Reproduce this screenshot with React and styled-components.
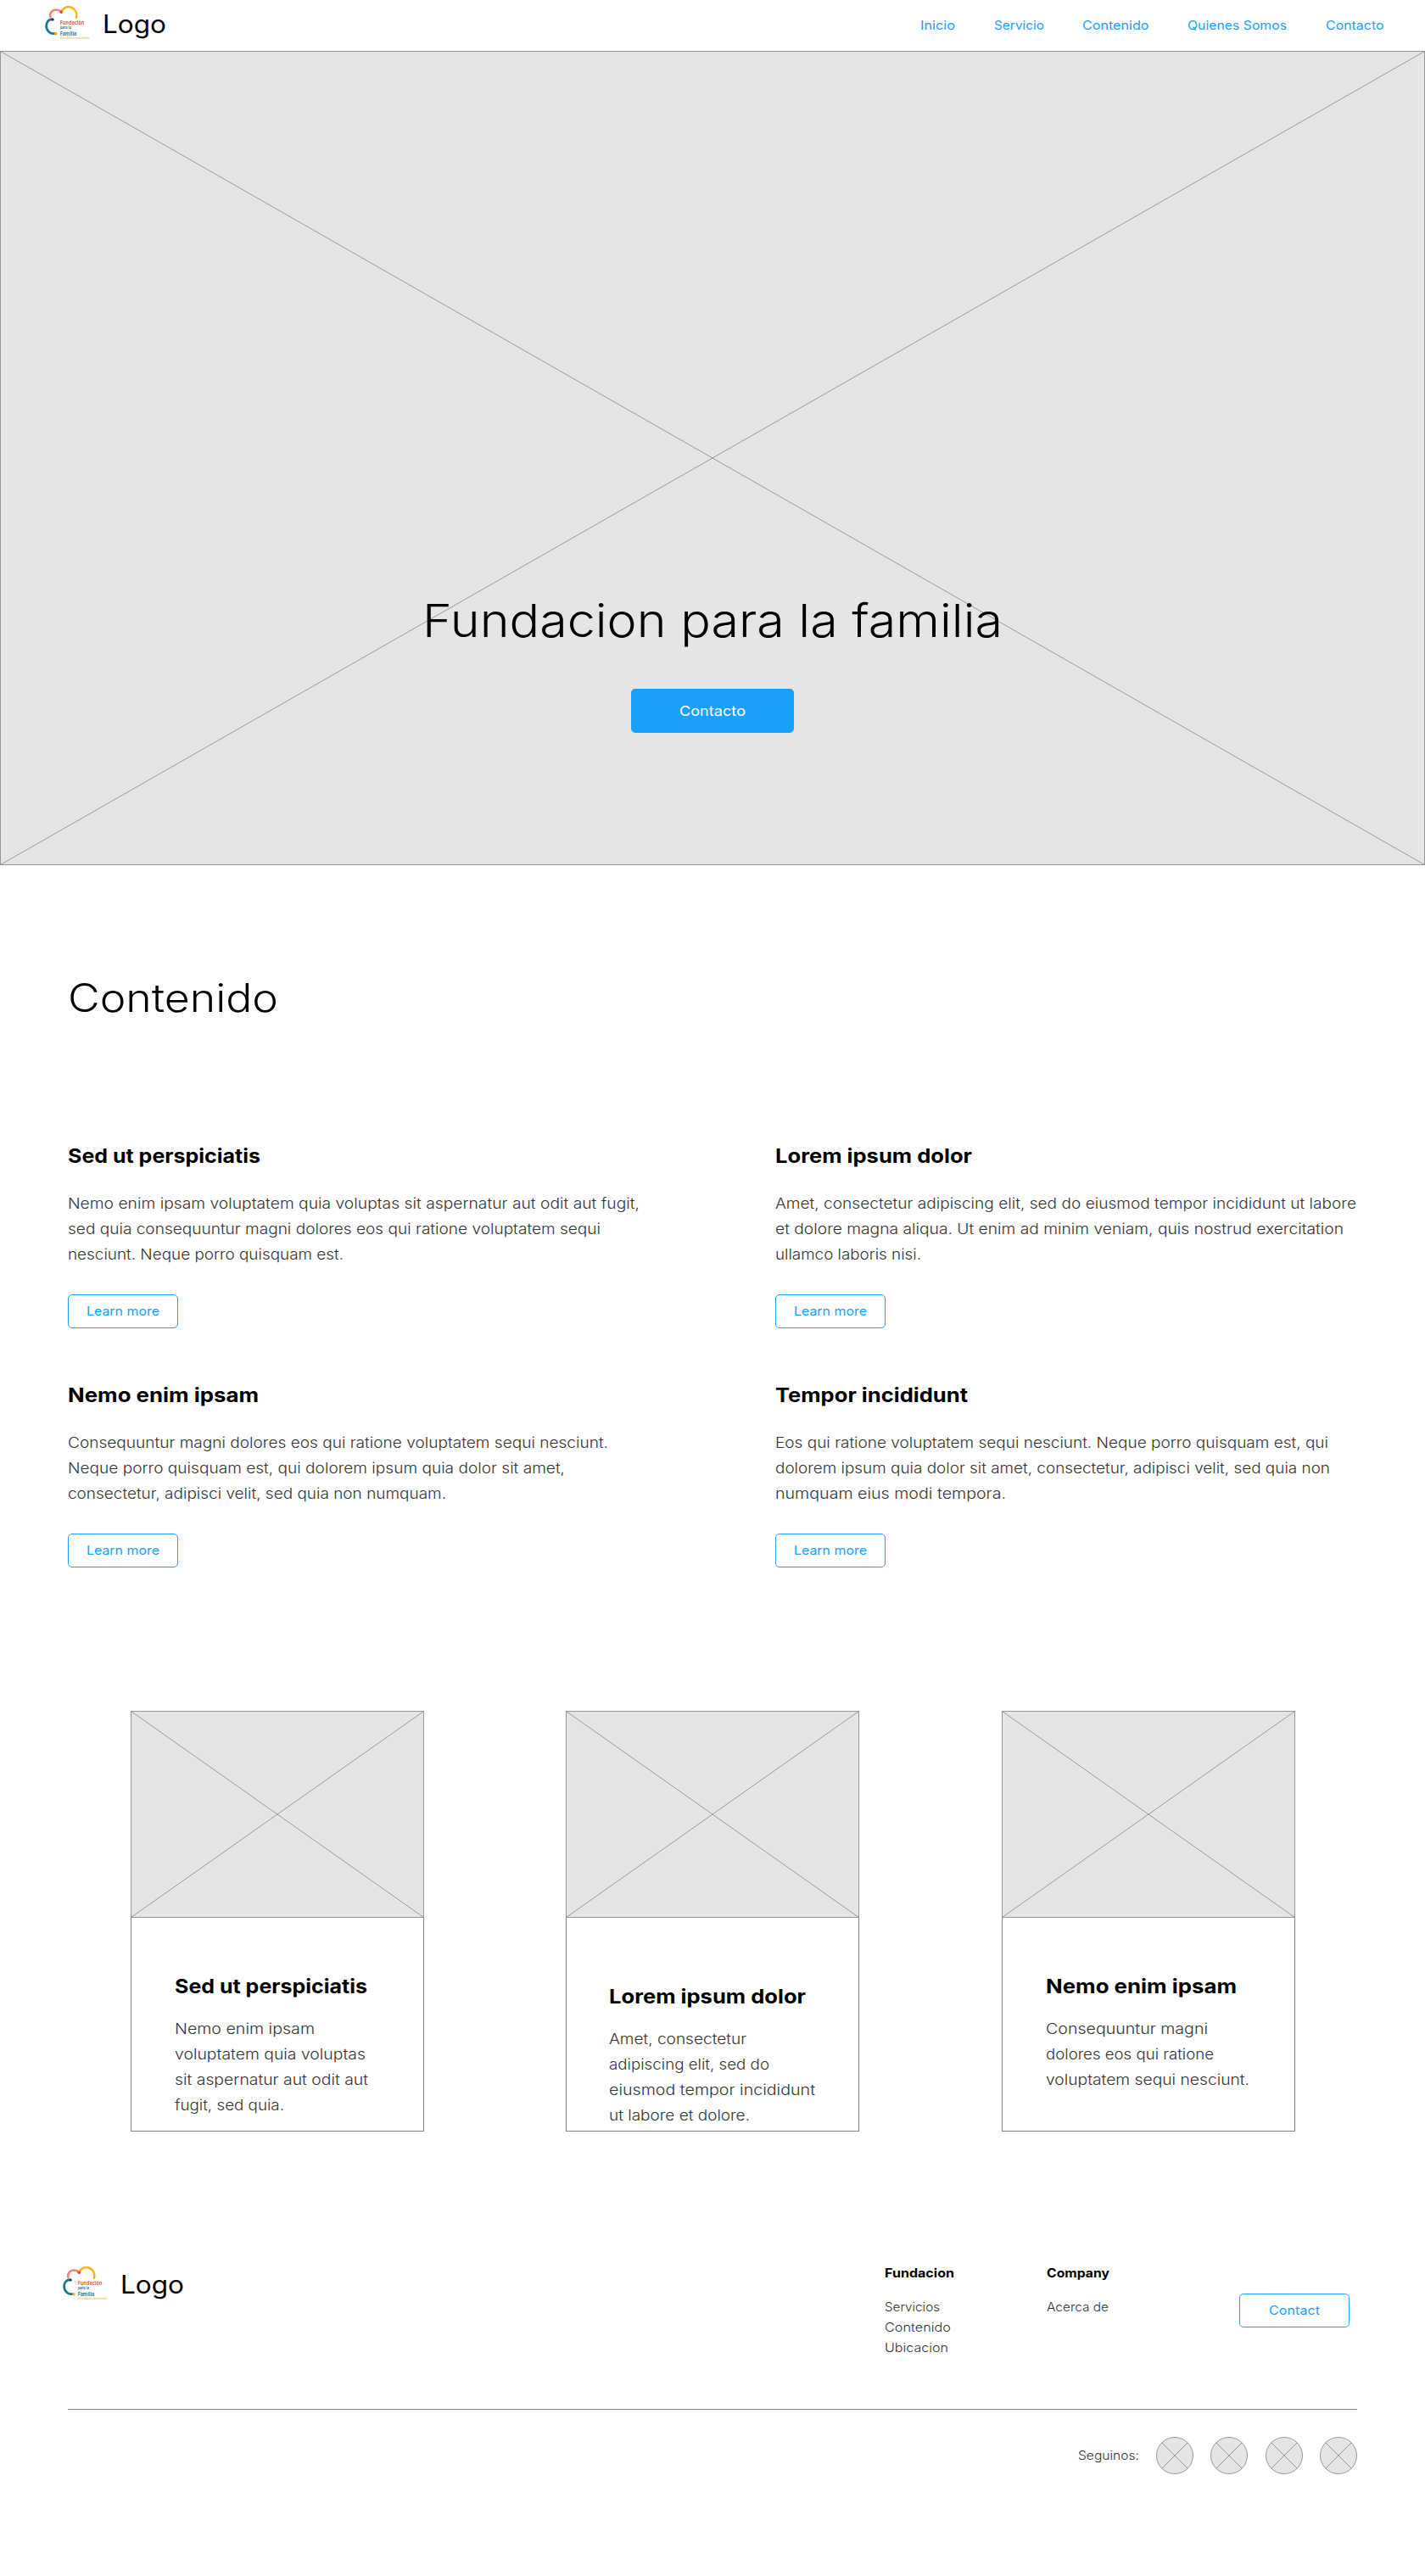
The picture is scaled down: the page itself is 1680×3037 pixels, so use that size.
import React, { useLayoutEffect, useRef, useState } from "react";
import styled, { createGlobalStyle } from "styled-components";

const BLUE = "#1a9ffc";

const GlobalStyle = createGlobalStyle`
  *, *::before, *::after { box-sizing: border-box; }
  body {
    margin: 0;
    background: #fff;
    color: #000;
    font-family: Inter, "Open Sans", "Liberation Sans", sans-serif;
    font-kerning: normal;
  }
  h1, h2, h3, h4, p, ul { margin: 0; padding: 0; }
  ul { list-style: none; }
  a { color: inherit; text-decoration: none; }
`;

/* One line of type, widened so that it fills the given measure. */
const Measure = styled.span`
  display: block;
  white-space: pre;
`;

const Stretch = styled.span`
  display: block;
  width: max-content;
  transform-origin: 0 50%;
`;

function Fit({ width, children }) {
  const ref = useRef(null);
  const [scale, setScale] = useState(1);
  useLayoutEffect(() => {
    setScale(width / parseFloat(getComputedStyle(ref.current).width));
  }, [width, children]);
  return (
    <Measure style={{ width }}>
      <Stretch ref={ref} style={{ transform: `scaleX(${scale})` }}>{children}</Stretch>
    </Measure>
  );
}

const Page = styled.div`
  width: 1680px;
  height: 3037px;
  overflow: hidden;
  background: #fff;
`;

const Header = styled.header`
  display: flex;
  justify-content: space-between;
  height: 60px;
  padding: 0 49px 0 50px;
`;

const BrandLink = styled.a`
  display: flex;
  align-items: flex-start;
  height: 60px;
`;

const Mark = styled.svg`
  display: block;
  width: 64px;
  height: 60px;
`;

const MarkText = styled.text`
  font-family: "Open Sans", "Noto Sans", sans-serif;
  font-weight: ${(p) => p.$weight || 700};
  font-size: ${(p) => p.$size}px;
  fill: ${(p) => p.$fill};
`;

const Wordmark = styled.span`
  margin-left: 7px;
  font-size: 29.5px;
  line-height: 57px;
  font-weight: 400;
`;

const Nav = styled.nav`
  display: flex;
  align-items: center;
  height: 60px;
  padding-bottom: 1px;
  gap: 45.5px;
  color: ${BLUE};
  font-size: 14.5px;
  font-weight: 400;
`;

const Hero = styled.section`
  position: relative;
  display: flex;
  flex-direction: column;
  align-items: center;
  height: 960px;
  padding-top: 638px;
`;

const Placeholder = styled.svg`
  display: block;
  width: ${(p) => p.width}px;
  height: ${(p) => p.height}px;
`;

const HeroBackdrop = styled.div`
  position: absolute;
  inset: 0;
`;

const HeroTitle = styled.h1`
  position: relative;
  font-size: 54px;
  line-height: 68px;
  font-weight: 300;
`;

const PrimaryButton = styled.a`
  position: relative;
  display: flex;
  align-items: center;
  justify-content: center;
  width: 192px;
  height: 52px;
  margin-top: 46px;
  border-radius: 5px;
  background: ${BLUE};
  color: #fff;
  font-size: 16.5px;
  font-weight: 400;
`;

const OutlineButton = styled.a`
  display: flex;
  align-items: center;
  justify-content: center;
  width: 130px;
  height: 40px;
  margin-top: ${(p) => p.$top}px;
  padding-bottom: 1px;
  border: 1px solid ${BLUE};
  border-radius: 5px;
  color: ${BLUE};
  font-size: 14.5px;
  font-weight: 400;
`;

const Content = styled.section`
  padding: 127px 80px 0;
`;

const SectionTitle = styled.h2`
  font-size: 46px;
  line-height: 58px;
  font-weight: 300;
`;

const Topics = styled.div`
  display: grid;
  grid-template-columns: 834px 1fr;
  row-gap: 64px;
  margin-top: 143px;
`;

const Subtitle = styled.h3`
  font-size: 23px;
  line-height: 30px;
  font-weight: 700;
`;

const Copy = styled.p`
  margin-top: ${(p) => p.$top}px;
  color: #333;
  font-size: 17px;
  line-height: 30px;
  font-weight: 300;
`;

const Cards = styled.section`
  display: grid;
  grid-template-columns: 513px 514px 346px;
  margin-top: 169px;
  padding-left: 154px;
`;

const Card = styled.article`
  width: 346px;
  height: 496px;
  border: 1px solid #808080;
`;

const CardImage = styled.div`
  margin: -1px -1px 0;
`;

const CardBody = styled.div`
  padding: ${(p) => (p.$lowered ? 78 : 66)}px 0 0 ${(p) => (p.$lowered ? 50 : 51)}px;
`;

const Footer = styled.footer`
  padding: 152px 80px 0;
`;

const FooterTop = styled.div`
  display: flex;
  height: 175px;
`;

const FooterBrand = styled.div`
  width: 963px;
  margin-left: -9px;
`;

const FooterColumn = styled.div`
  width: ${(p) => p.$width}px;
  padding-top: 3px;
  margin-left: ${(p) => p.$left || 0}px;
  line-height: 24px;
  font-size: 14.5px;
`;

const FooterHeading = styled.h4`
  font-size: 14.5px;
  font-weight: 700;
`;

const FooterLinks = styled.ul`
  margin-top: 16px;
  color: #333;
  font-weight: 300;
`;

const Rule = styled.div`
  height: 1px;
  background: #808080;
`;

const Social = styled.div`
  display: flex;
  align-items: center;
  justify-content: flex-end;
  gap: 20.33px;
  margin-top: 32px;
  color: #333;
  font-size: 14.5px;
  font-weight: 300;
`;

const SocialLabel = styled.span`
  padding-bottom: 1px;
`;

const Disc = styled.svg`
  display: block;
  width: 44px;
  height: 44px;
`;

function ImageBox({ width, height }) {
  return (
    <Placeholder width={width} height={height} viewBox={`0 0 ${width} ${height}`}>
      <rect x="0.5" y="0.5" width={width - 1} height={height - 1} fill="#e5e5e5" stroke="#979797" />
      <path d={`M0.5 0.5L${width - 0.5} ${height - 0.5}M${width - 0.5} 0.5L0.5 ${height - 0.5}`} stroke="#979797" strokeWidth="1" fill="none" />
    </Placeholder>
  );
}

function Brand() {
  return (
    <BrandLink href="#">
      <Mark viewBox="0 0 64 60">
        <g fill="none" strokeLinecap="round">
          <path d="M9.5 20C8.2 14.8 12 11.4 16 11.4C19 11.4 21 12.6 22.2 14.3" stroke="#f5826c" strokeWidth="2.5" />
          <path d="M22.6 13.8C24.6 8.6 30 6.9 34.6 9C39.4 11.2 41.2 16 40 20.6" stroke="#fbb019" strokeWidth="2.5" />
          <path d="M12 22.8C7 22.4 4.4 26.6 4.6 31C4.8 36 9 40.4 14.6 39.6" stroke="#17798c" strokeWidth="2.8" />
        </g>
        <circle cx="22.3" cy="14.2" r="1.7" fill="#e5452e" />
        <circle cx="12.2" cy="23" r="1.5" fill="#17404e" />
        <circle cx="15.8" cy="39.7" r="1.8" fill="#e9a923" />
        <MarkText x="20.7" y="29" $size={6.6} $fill="#d9674f" textLength="28.6" lengthAdjust="spacingAndGlyphs">Fundación</MarkText>
        <MarkText x="20.9" y="34.3" $size={4.8} $fill="#2f7f91" textLength="13.2" lengthAdjust="spacingAndGlyphs">para la</MarkText>
        <MarkText x="20.7" y="41.5" $size={6.6} $fill="#2f7f91" textLength="19.6" lengthAdjust="spacingAndGlyphs">Familia</MarkText>
        <MarkText x="20.7" y="46" $size={2.9} $weight={600} $fill="#dfc04a" textLength="34.3" lengthAdjust="spacingAndGlyphs">Niñez Adolescencia Familia</MarkText>
      </Mark>
      <Wordmark>
        <Fit width={75}>Logo</Fit>
      </Wordmark>
    </BrandLink>
  );
}

const nav = [
  ["Inicio", 41],
  ["Servicio", 59],
  ["Contenido", 78.5],
  ["Quienes Somos", 117],
  ["Contacto", 68.5],
];

const topics = [
  {
    title: ["Sed ut perspiciatis", 227],
    lines: [
      ["Nemo enim ipsam voluptatem quia voluptas sit aspernatur aut odit aut fugit,", 674],
      ["sed quia consequuntur magni dolores eos qui ratione voluptatem sequi", 628],
      ["nesciunt. Neque porro quisquam est.", 325],
    ],
  },
  {
    title: ["Lorem ipsum dolor", 232],
    lines: [
      ["Amet, consectetur adipiscing elit, sed do eiusmod tempor incididunt ut labore", 685],
      ["et dolore magna aliqua. Ut enim ad minim veniam, quis nostrud exercitation", 670],
      ["ullamco laboris nisi.", 172],
    ],
  },
  {
    title: ["Nemo enim ipsam", 225],
    lines: [
      ["Consequuntur magni dolores eos qui ratione voluptatem sequi nesciunt.", 637],
      ["Neque porro quisquam est, qui dolorem ipsum quia dolor sit amet,", 586],
      ["consectetur, adipisci velit, sed quia non numquam.", 446],
    ],
  },
  {
    title: ["Tempor incididunt", 227],
    lines: [
      ["Eos qui ratione voluptatem sequi nesciunt. Neque porro quisquam est, qui", 652],
      ["dolorem ipsum quia dolor sit amet, consectetur, adipisci velit, sed quia non", 654],
      ["numquam eius modi tempora.", 272],
    ],
  },
];

const cards = [
  {
    title: ["Sed ut perspiciatis", 227],
    lines: [
      ["Nemo enim ipsam", 165],
      ["voluptatem quia voluptas", 225],
      ["sit aspernatur aut odit aut", 228],
      ["fugit, sed quia.", 129],
    ],
  },
  {
    title: ["Lorem ipsum dolor", 232],
    lowered: true,
    lines: [
      ["Amet, consectetur", 162],
      ["adipiscing elit, sed do", 189],
      ["eiusmod tempor incididunt", 243],
      ["ut labore et dolore.", 166],
    ],
  },
  {
    title: ["Nemo enim ipsam", 225],
    lines: [
      ["Consequuntur magni", 191],
      ["dolores eos qui ratione", 198],
      ["voluptatem sequi nesciunt.", 240],
    ],
  },
];

function Lines({ items }) {
  return items.map(([text, width]) => (
    <Fit key={text} width={width}>{text}</Fit>
  ));
}

function App() {
  return (
    <Page>
      <GlobalStyle />
      <Header>
        <Brand />
        <Nav>
          {nav.map(([label, width]) => (
            <a href="#" key={label}><Fit width={width}>{label}</Fit></a>
          ))}
        </Nav>
      </Header>

      <Hero>
        <HeroBackdrop><ImageBox width={1680} height={960} /></HeroBackdrop>
        <HeroTitle><Fit width={684}>Fundacion para la familia</Fit></HeroTitle>
        <PrimaryButton href="#"><Fit width={78}>Contacto</Fit></PrimaryButton>
      </Hero>

      <Content>
        <SectionTitle><Fit width={248}>Contenido</Fit></SectionTitle>
        <Topics>
          {topics.map(({ title, lines }) => (
            <article key={title[0]}>
              <Subtitle><Fit width={title[1]}>{title[0]}</Fit></Subtitle>
              <Copy $top={26}><Lines items={lines} /></Copy>
              <OutlineButton href="#" $top={32}><Fit width={86}>Learn more</Fit></OutlineButton>
            </article>
          ))}
        </Topics>
      </Content>

      <Cards>
        {cards.map(({ title, lines, lowered }) => (
          <Card key={title[0]}>
            <CardImage><ImageBox width={346} height={244} /></CardImage>
            <CardBody $lowered={lowered}>
              <Subtitle><Fit width={title[1]}>{title[0]}</Fit></Subtitle>
              <Copy $top={20}><Lines items={lines} /></Copy>
            </CardBody>
          </Card>
        ))}
      </Cards>

      <Footer>
        <FooterTop>
          <FooterBrand><Brand /></FooterBrand>
          <FooterColumn $width={191} $left={9}>
            <FooterHeading><Fit width={82}>Fundacion</Fit></FooterHeading>
            <FooterLinks>
              <li><Fit width={65}>Servicios</Fit></li>
              <li><Fit width={78}>Contenido</Fit></li>
              <li><Fit width={75}>Ubicacion</Fit></li>
            </FooterLinks>
          </FooterColumn>
          <FooterColumn $width={227}>
            <FooterHeading><Fit width={74}>Company</Fit></FooterHeading>
            <FooterLinks>
              <li><Fit width={73}>Acerca de</Fit></li>
            </FooterLinks>
          </FooterColumn>
          <OutlineButton href="#" $top={39}><Fit width={60}>Contact</Fit></OutlineButton>
        </FooterTop>
        <Rule />
        <Social>
          <SocialLabel><Fit width={72}>Seguinos:</Fit></SocialLabel>
          {[0, 1, 2, 3].map((n) => (
            <Disc key={n} viewBox="0 0 44 44">
              <circle cx="22" cy="22" r="21.5" fill="#e5e5e5" stroke="#979797" />
              <path d="M6.8 6.8L37.2 37.2M37.2 6.8L6.8 37.2" stroke="#979797" />
            </Disc>
          ))}
        </Social>
      </Footer>
    </Page>
  );
}

export default App;
